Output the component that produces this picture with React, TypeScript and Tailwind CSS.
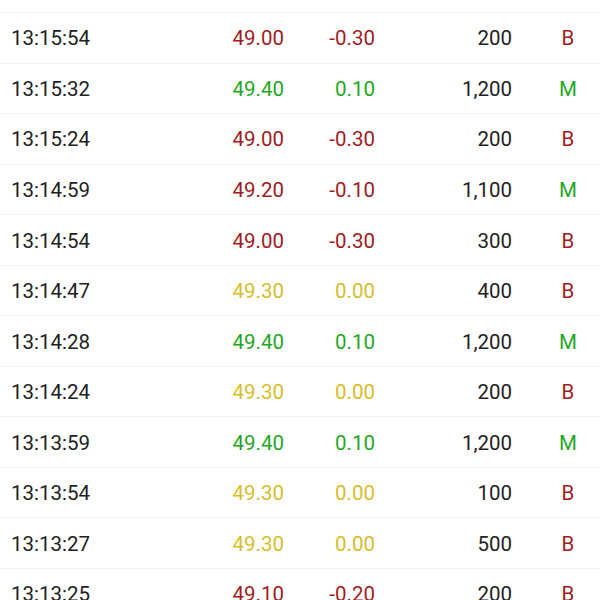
import React from "react";

type Row = { t: string; p: string; c: string; v: string; k: "B" | "M"; col: "r" | "g" | "y" };

const rows: Row[] = [
  { t: "13:15:54", p: "49.00", c: "-0.30", v: "200", k: "B", col: "r" },
  { t: "13:15:32", p: "49.40", c: "0.10", v: "1,200", k: "M", col: "g" },
  { t: "13:15:24", p: "49.00", c: "-0.30", v: "200", k: "B", col: "r" },
  { t: "13:14:59", p: "49.20", c: "-0.10", v: "1,100", k: "M", col: "r" },
  { t: "13:14:54", p: "49.00", c: "-0.30", v: "300", k: "B", col: "r" },
  { t: "13:14:47", p: "49.30", c: "0.00", v: "400", k: "B", col: "y" },
  { t: "13:14:28", p: "49.40", c: "0.10", v: "1,200", k: "M", col: "g" },
  { t: "13:14:24", p: "49.30", c: "0.00", v: "200", k: "B", col: "y" },
  { t: "13:13:59", p: "49.40", c: "0.10", v: "1,200", k: "M", col: "g" },
  { t: "13:13:54", p: "49.30", c: "0.00", v: "100", k: "B", col: "y" },
  { t: "13:13:27", p: "49.30", c: "0.00", v: "500", k: "B", col: "y" },
  { t: "13:13:25", p: "49.10", c: "-0.20", v: "200", k: "B", col: "r" },
];

const colorCls = {
  r: "text-[#a31b1f]",
  g: "text-[#1fa81f]",
  y: "text-[#d8bd2c]",
};

export default function App() {
  return (
    <div
      className="w-[600px] h-[600px] overflow-hidden bg-white text-[20.5px] text-[#222222]"
      style={{ fontFamily: "Roboto, 'Liberation Sans', sans-serif" }}
    >
      <div className="h-[13px] border-b border-[#f1f1f1]" />
      {rows.map((r, i) => (
        <div
          key={i}
          className="h-[50.55px] pt-[2px] border-b border-[#f1f1f1] flex items-center"
        >
          <div className="w-[199px] shrink-0 pl-[11px]">{r.t}</div>
          <div className={`w-[85px] shrink-0 text-right ${colorCls[r.col]}`}>{r.p}</div>
          <div className={`w-[91px] shrink-0 text-right ${colorCls[r.col]}`}>{r.c}</div>
          <div className="w-[137px] shrink-0 text-right">{r.v}</div>
          <div
            className={`w-[112px] shrink-0 text-center ${r.k === "B" ? "text-[#a31b1f]" : "text-[#1fa81f]"}`}
          >
            {r.k}
          </div>
        </div>
      ))}
    </div>
  );
}
